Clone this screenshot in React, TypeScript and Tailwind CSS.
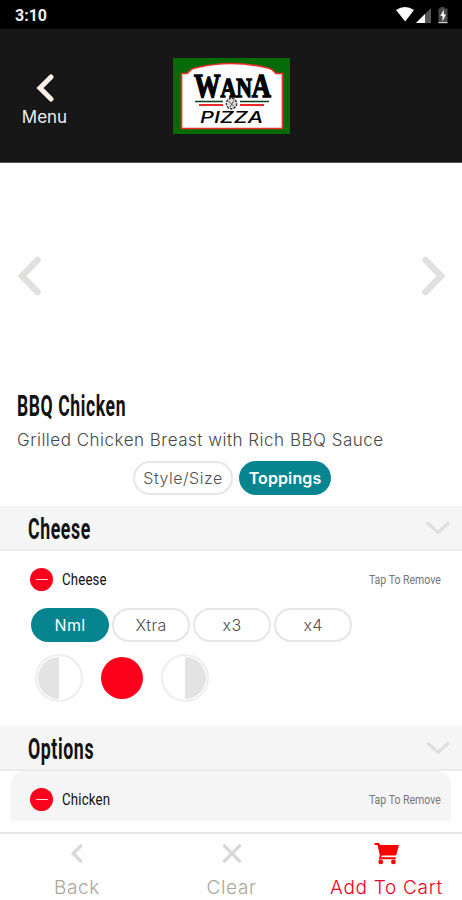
import clsx from 'clsx'

const SIZES = ['Nml', 'Xtra', 'x3', 'x4']

export default function App() {
  return (
    <div className="flex h-[900px] w-[462px] flex-col overflow-hidden bg-[#fefefe] font-['Inter',sans-serif]">
      <StatusBar />
      <Header />

      {/* Carousel */}
      <div className="flex h-[224px] shrink-0 items-center justify-between pt-px pr-[16px] pl-[17px]">
        <Chevron className="h-[40px] w-[26px]" />
        <Chevron className="h-[40px] w-[26px] rotate-180" />
      </div>

      <div className="flex h-[119px] shrink-0 flex-col pl-[17px]">
        <Condensed className="h-[40px] text-[29px] leading-[39px] font-bold tracking-[1px] scale-x-[0.605]">
          BBQ Chicken
        </Condensed>
        <p className="h-[26px] text-[17px] leading-[27px] font-light tracking-[0.5px] whitespace-nowrap text-[#484848]">
          Grilled Chicken Breast with Rich BBQ Sauce
        </p>
        <div className="mt-[8px] ml-[116px] flex gap-[6px]">
          <Pill className="w-[100px] tracking-[0.5px]">Style/Size</Pill>
          <Pill active className="w-[92px] font-semibold tracking-[0.1px]">Toppings</Pill>
        </div>
      </div>

      <SectionHeader title="Cheese" />
      <div className="h-[175px] shrink-0">
        <div className="flex h-[57px] items-center pr-[21px] pb-px pl-[30px]">
          <ToppingRow name="Cheese" />
        </div>
        <div className="flex gap-[3px] pl-[31px]">
          {SIZES.map((s, i) => (
            <Pill key={s} active={i === 0} className="w-[78px] tracking-[0.3px]">{s}</Pill>
          ))}
        </div>
        <div className="mt-[12px] flex items-center pl-[35px]">
          <HalfCircle side="left" />
          <div className="mx-[18px] size-[42px] rounded-full bg-[#fd001b]" />
          <HalfCircle side="right" />
        </div>
      </div>

      <SectionHeader title="Options" />
      <div className="flex h-[61px] shrink-0 items-start px-[11px]">
        <div className="flex h-[50px] w-full items-center rounded-t-[14px] bg-[#f5f5f5] pt-[7px] pr-[10px] pl-[19px]">
          <ToppingRow name="Chicken" />
        </div>
      </div>

      <Footer />
    </div>
  )
}

function StatusBar() {
  return (
    <div className="flex h-[29px] shrink-0 items-center justify-between bg-black pr-[14px] pl-[15px]">
      <span className="pt-[3px] font-['Roboto',sans-serif] text-[16px] leading-none font-bold text-[#eee]">3:10</span>
      <svg width="54" height="18" viewBox="394 6 54 18" className="mt-px">
        <path d="M396 10 Q405 4 414 10 L405.2 21.500Z" fill="#fff" />
        <path d="M431 8 V23 H416Z" fill="#555" />
        <path d="M425 14 V23 H416Z" fill="#fff" />
        <path d="M440.500 7 h4 v1.500 h3 V23 h-9 V8.500 h2Z" fill="#4b4b4b" />
        <path d="M443.800 9.500 l-3.500 6.500 h2.200 v5.500 l3.500 -7 h-2.200Z" fill="#fff" />
        <path d="M438.500 22 h9 v1.200 h-9Z" fill="#ccc" />
      </svg>
    </div>
  )
}

function Header() {
  return (
    <div className="flex h-[134px] shrink-0 items-start border-b border-[#555] bg-[#171717] pl-[22px]">
      <div className="flex w-[45px] flex-col items-center pt-[45px]">
        <svg width="18" height="28" viewBox="0 0 18 28" fill="none">
          <path d="M15 3 L4 14 L15 25" stroke="#fdeee6" strokeWidth="5" strokeLinecap="round" strokeLinejoin="miter" />
        </svg>
        <span className="mt-[3px] text-[17px] leading-[24px] text-[#eee]">Menu</span>
      </div>
      <Logo />
    </div>
  )
}

function Logo() {
  return (
    <svg width="117" height="76" viewBox="0 0 117 76" className="mt-[29px] ml-[106px]">
      <path d="M0 0H117V76H0Z" fill="#056b08" />
      <path
        d="M8.500 15.500 H14 C17 13 17 11 22 10 Q58.500 1 95 10 C100 11 101 13 103 15.500 H109.500 V70.500 H8.500Z"
        fill="#fff"
        stroke="#ef2b2b"
        strokeWidth="1.700"
      />
      <text
        x="21"
        y="38.500"
        fontFamily="'Liberation Serif', serif"
        fontWeight="700"
        fill="#000"
        stroke="#000"
        strokeWidth="1.400"
        textLength="77"
        lengthAdjust="spacingAndGlyphs"
      >
        <tspan fontSize="33">W</tspan>
        <tspan fontSize="27">AN</tspan>
        <tspan fontSize="33">A</tspan>
      </text>
      <path d="M22 43.500H50M67 43.500H96" stroke="#103d19" strokeWidth="1.600" />
      <path d="M26 47H50M67 47H91" stroke="#ee2929" strokeWidth="2" />
      <circle cx="58.500" cy="45.500" r="5.200" fill="#ddd" stroke="#333" strokeWidth="1.400" strokeDasharray="2.500 1" />
      <path d="M55.500 43 L61 48.500 M61 42.500 L57 49" stroke="#555" strokeWidth="1" />
      <text
        x="27"
        y="65"
        fontFamily="Inter, sans-serif"
        fontStyle="italic"
        fontWeight="500"
        fontSize="16"
        textLength="63"
        lengthAdjust="spacingAndGlyphs"
      >
        PIZZA
      </text>
    </svg>
  )
}

function Chevron({ className }: { className?: string }) {
  return (
    <svg viewBox="0 0 26 40" fill="none" className={className}>
      <path d="M20.500 4 L5 20 L20.500 36" stroke="#e0e0df" strokeWidth="6.500" strokeLinecap="round" />
    </svg>
  )
}

function Condensed({ className, children }: { className?: string; children: React.ReactNode }) {
  return (
    <div className={clsx("origin-left font-['Roboto',sans-serif] whitespace-nowrap text-[#111]", className)}>
      {children}
    </div>
  )
}

function Pill({ active, className, children }: { active?: boolean; className?: string; children: React.ReactNode }) {
  return (
    <div
      className={clsx(
        'flex h-[34px] items-center justify-center rounded-full text-[16px]',
        active ? 'bg-[#068590] text-white' : 'border-2 border-[#e6e6e6] bg-white font-light text-[#505050]',
        className,
      )}
    >
      {children}
    </div>
  )
}

function SectionHeader({ title }: { title: string }) {
  return (
    <div className="flex h-[45px] shrink-0 items-center justify-between border-b-2 border-[#ebebeb] bg-[#f5f5f5] pr-[10px] pl-[28px]">
      <Condensed className="pt-[3px] text-[29px] leading-none font-bold tracking-[1px] scale-x-[0.61]">
        {title}
      </Condensed>
      <svg width="28" height="16" viewBox="0 0 28 16" fill="none">
        <path d="M3 2.500 L14 12.500 L25 2.500" stroke="#dfdfdf" strokeWidth="3.500" />
      </svg>
    </div>
  )
}

function ToppingRow({ name }: { name: string }) {
  return (
    <>
      <div className="flex size-[23px] shrink-0 items-center justify-center rounded-full bg-[#fd001b]">
        <div className="h-px w-[12px] bg-[#ffd9dc]" />
      </div>
      <Condensed className="ml-[9px] text-[17px] leading-none tracking-[0.2px] scale-x-[0.78]">{name}</Condensed>
      <span className="ml-auto origin-right scale-x-[0.81] font-['Roboto',sans-serif] text-[13px] leading-none text-[#777]">
        Tap To Remove
      </span>
    </>
  )
}

function HalfCircle({ side }: { side: 'left' | 'right' }) {
  return (
    <div className="flex size-[48px] items-center justify-center rounded-full border-2 border-[#eeeeee] bg-white">
      <svg width="42" height="42" viewBox="0 0 42 42" className={side === 'right' ? 'rotate-180' : ''}>
        <path d="M21 0 A21 21 0 0 0 21 42Z" fill="#e3e3e3" />
      </svg>
    </div>
  )
}

function Footer() {
  return (
    <div className="flex h-[68px] shrink-0 border-t-2 border-[#e5e5e5] bg-[#fefefe] text-[19px] leading-[24px] font-light tracking-[0.7px]">
      <div className="flex w-[154px] shrink-0 flex-col items-center text-[#aaa89a]">
        <svg width="16" height="24" viewBox="0 0 16 24" fill="none" className="mt-[8px]">
          <path d="M13 3 L4 12 L13 21" stroke="#d8d8d8" strokeWidth="3.500" />
        </svg>
        <span className="mt-[11px]">Back</span>
      </div>
      <div className="flex w-[155px] shrink-0 flex-col items-center text-[#aaa89a]">
        <svg width="24" height="24" viewBox="0 0 24 24" fill="none" className="mt-[8px]">
          <path d="M3 3 L21 21 M21 3 L3 21" stroke="#d8d8d8" strokeWidth="3.500" />
        </svg>
        <span className="mt-[11px]">Clear</span>
      </div>
      <div className="flex w-[155px] shrink-0 flex-col items-center text-[#ed001f]">
        <svg width="26" height="24" viewBox="0 0 26 24" className="mt-[8px]" fill="#fd0000">
          <path d="M0 1 H4.500 L6 3 H25.500 L22.500 14 H7.500 L7 16 H22 V18 H4.500 L5.500 13.500 L3 3 H0Z" />
          <circle cx="6.500" cy="20.800" r="2.500" />
          <circle cx="19.700" cy="20.800" r="2.500" />
        </svg>
        <span className="mt-[11px] whitespace-nowrap">Add To Cart</span>
      </div>
    </div>
  )
}
